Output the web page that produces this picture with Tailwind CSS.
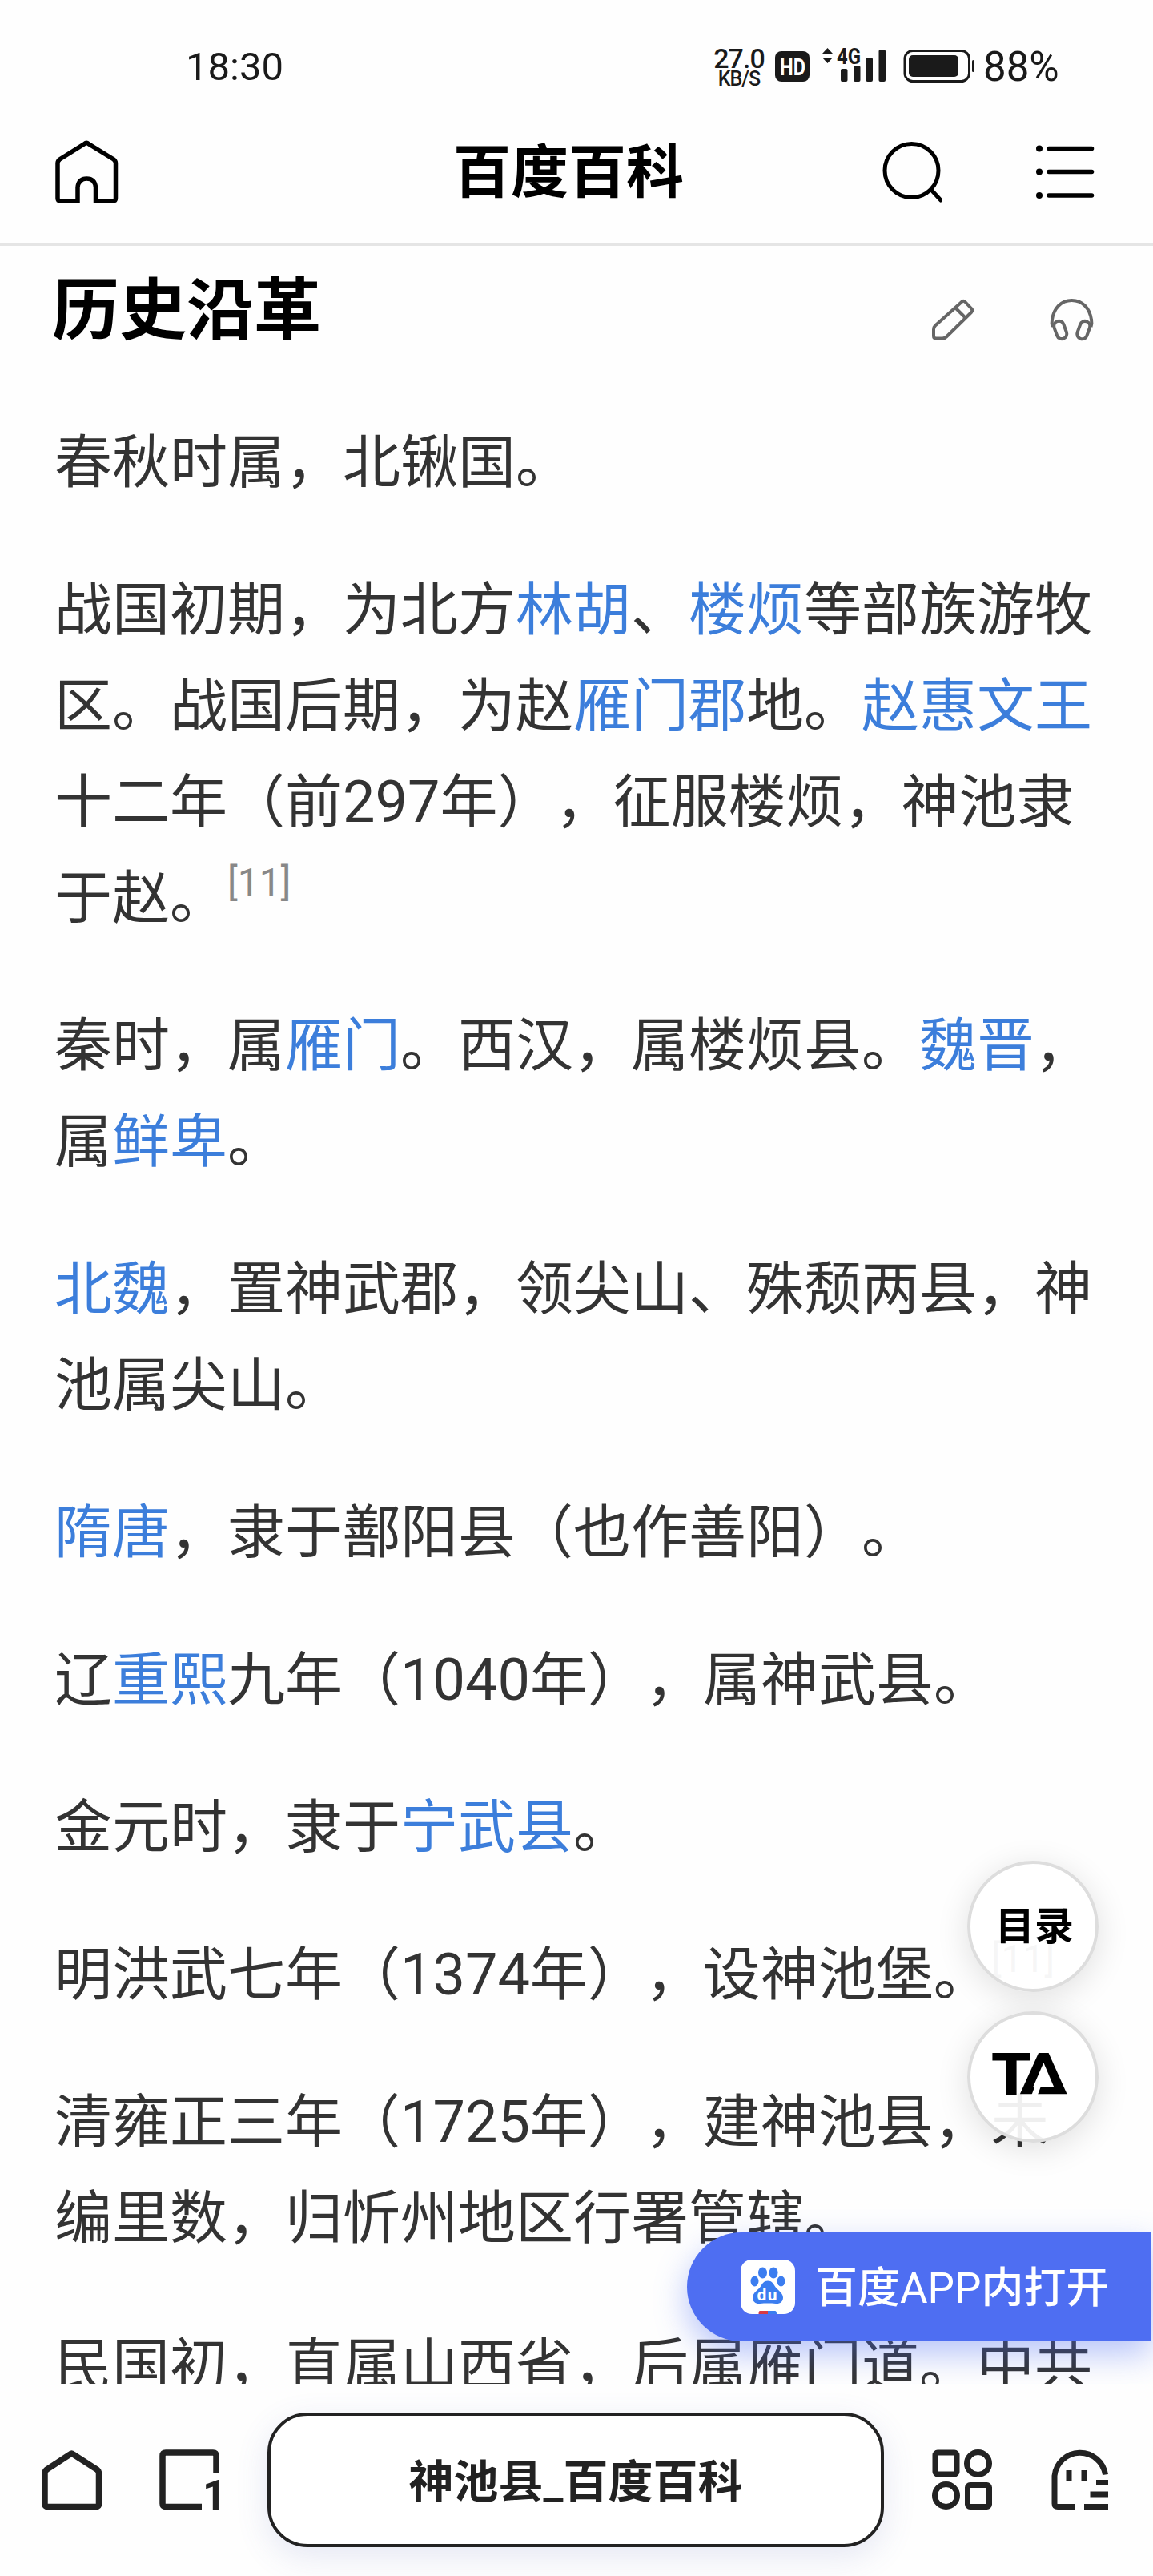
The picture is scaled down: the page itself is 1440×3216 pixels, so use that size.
<!DOCTYPE html>
<html lang="zh-CN">
<head>
    <meta charset="UTF-8">
    <meta name="viewport" content="width=device-width, initial-scale=1.0">
    <script src="https://cdn.jsdelivr.net/npm/@tailwindcss/browser@4"></script>
    <title>神池县_百度百科</title>
</head>
<body class="bg-[#fefefe] font-[Roboto,'Noto_Sans_CJK_SC',sans-serif]">
<div class="w-[1440px] h-[3216px] flex flex-col overflow-hidden [text-spacing-trim:space-all]">

    <!-- Status bar -->
    <div class="h-[124px] shrink-0 flex items-start justify-between pl-[232px] pr-[114px] text-[#1a1a1a]">
        <span class="mt-[54px] text-[49px] leading-[60px]">18:30</span>
        <div class="flex items-start">
            <div class="mt-[56px] w-[66px] flex flex-col items-center font-medium">
                <span class="text-[34px] leading-[34px] tracking-[-1px]">27.0</span>
                <span class="text-[25px] leading-[18px] tracking-[-1px]">KB/S</span>
            </div>
            <svg class="mt-[56px] ml-[12px] w-[254px] h-[52px]" viewBox="968 56 254 52" fill="#1a1a1a">
                <rect x="968" y="64" width="43" height="38" rx="8"/>
                <text x="974" y="94" font-size="29" font-weight="700" fill="#fff" textLength="32" lengthAdjust="spacingAndGlyphs">HD</text>
                <path d="M1027 67l6.500-7 6.500 7zM1027 72l6.500 7 6.500-7z"/>
                <text x="1045" y="79.500" font-size="28" font-weight="700" textLength="30" lengthAdjust="spacingAndGlyphs">4G</text>
                <rect x="1050" y="86" width="8.500" height="16" rx="2"/>
                <rect x="1066" y="82" width="8.500" height="20" rx="2"/>
                <rect x="1081.500" y="72" width="8.500" height="30" rx="2"/>
                <rect x="1097.500" y="62" width="8.500" height="40" rx="2"/>
                <rect x="1130" y="63.500" width="80.500" height="38" rx="10" fill="none" stroke="#1a1a1a" stroke-width="3"/>
                <rect x="1135" y="69" width="62" height="27" rx="5"/>
                <rect x="1214" y="75" width="3" height="15" rx="1.500"/>
            </svg>
            <span class="mt-[54px] ml-[6px] w-[98px] text-[51px] leading-[60px]">88%</span>
        </div>
    </div>

    <!-- Page header -->
    <header class="h-[183px] shrink-0 grid grid-cols-[1fr_288px_1fr] items-center pl-[68px] pr-[72px] border-b-4 border-[#e5e5e5] text-black">
        <svg class="w-20 h-[82px]" viewBox="68 173 80 82" fill="none" stroke="currentColor" stroke-width="5.500">
            <path d="M97 251H75.500q-3.500 0-3.500-3.500V204q0-3 2.500-5L105.500 179.500q2.500-2.500 5 0L142 199q2.500 2 2.500 5v43.500q0 3.500-3.500 3.500H119.500V234q-1-11-11.200-11T97 234z"/>
        </svg>
        <h1 class="mt-1 -ml-2 text-[72px] leading-[100px] font-bold whitespace-nowrap">百度百科</h1>
        <div class="flex items-center justify-end gap-[114px]">
            <svg class="w-[76px] h-20" viewBox="1101 174 76 80" fill="none" stroke="currentColor" stroke-width="5" stroke-linecap="round">
                <circle cx="1138.500" cy="213" r="33.500"/>
                <path d="M1163 237l12 13"/>
            </svg>
            <svg class="w-[77px] h-20" viewBox="1293 174 77 80" fill="none" stroke="currentColor" stroke-width="5.500" stroke-linecap="round">
                <path d="M1312 185.500h53.500M1312 214.500h53.500M1312 244h53.500"/>
                <g fill="currentColor" stroke="none">
                    <circle cx="1300" cy="185.500" r="4"/><circle cx="1300" cy="214.500" r="4"/><circle cx="1300" cy="244" r="4"/>
                </g>
            </svg>
        </div>
    </header>

    <!-- Article -->
    <main class="relative h-[2669px] shrink-0 overflow-hidden px-[68px] text-[#333]">
        <div class="h-[211px] flex items-start justify-between pr-1">
            <h2 class="mt-[22px] -ml-[3px] text-[84px] leading-[120px] font-bold text-black">历史沿革</h2>
            <svg class="mt-[64px] w-[206px] h-14" viewBox="1162 371 206 56" fill="none" stroke="#666" stroke-width="4" stroke-linejoin="round">
                <path d="M1201 377q2-2.500 4.500 0l7.500 8q2.500 2.500 0 5l-31 30.500q-2 2-5 2h-8q-3 0-3-3v-8q0-3 2-5zM1193.500 384.500l12 12"/>
                <path d="M1314.500 408q-1.500-4-.5-9c2-14 11-24 24.500-24s22.500 10 24.500 24q1 5-.5 9"/>
                <rect x="1318" y="400.500" width="12.500" height="23" rx="6.200" transform="rotate(-20 1324 412)"/>
                <rect x="1347" y="400.500" width="12.500" height="23" rx="6.200" transform="rotate(20 1353 412)"/>
            </svg>
        </div>

        <div class="flex flex-col gap-16 text-[72px] leading-[120px]">
            <p>春秋时属，北锹国。</p>
            <p>战国初期，为北方<a class="text-[#3c7edb]">林胡</a>、<a class="text-[#3c7edb]">楼烦</a>等部族游牧<br>区。战国后期，为赵<a class="text-[#3c7edb]">雁门郡</a>地。<a class="text-[#3c7edb]">赵惠文王</a><br>十二年（前297年），征服楼烦，神池隶<br>于赵。<sup class="text-[48px] leading-none text-[#888] align-baseline relative -top-7">[11]</sup></p>
            <p>秦时，属<a class="text-[#3c7edb]">雁门</a>。西汉，属楼烦县。<a class="text-[#3c7edb]">魏晋</a>，<br>属<a class="text-[#3c7edb]">鲜卑</a>。</p>
            <p><a class="text-[#3c7edb]">北魏</a>，置神武郡，领尖山、殊颓两县，神<br>池属尖山。</p>
            <p><a class="text-[#3c7edb]">隋唐</a>，隶于鄯阳县（也作善阳）。</p>
            <p>辽<a class="text-[#3c7edb]">重熙</a>九年（1040年），属神武县。</p>
            <p>金元时，隶于<a class="text-[#3c7edb]">宁武县</a>。</p>
            <p>明洪武七年（1374年），设神池堡。<sup class="text-[48px] leading-none text-[#888] align-baseline relative -top-7">[11]</sup></p>
            <p>清雍正三年（1725年），建神池县，未<br>编里数，归忻州地区行署管辖。</p>
            <p class="whitespace-nowrap">民国初，直属山西省，后属雁门道。中共</p>
        </div>

        <!-- Floating buttons -->
        <div class="absolute right-[68px] top-[2016px] flex flex-col gap-6 text-black">
            <button class="size-[164px] rounded-full border-4 border-[#ddd] bg-white/92 shadow-[0_8px_40px_rgba(0,0,0,0.12)] text-[49px] leading-none font-bold"><span class="block ml-1">目录</span></button>
            <button class="size-[164px] rounded-full border-4 border-[#ddd] bg-white/92 shadow-[0_8px_40px_rgba(0,0,0,0.12)] flex justify-center">
                <svg class="mt-[47px] -ml-2 w-24 h-[58px]" viewBox="0 0 96 58">
                    <text x="0" y="53" font-size="73" font-weight="900" textLength="50" lengthAdjust="spacingAndGlyphs">T</text>
                    <text x="35" y="53" font-size="73" font-weight="700" textLength="60" lengthAdjust="spacingAndGlyphs">Δ</text>
                    <!-- notch in the base of the triangle -->
                    <path d="M53.500 55l5-13" stroke="#fff" stroke-width="7"/>
                </svg>
            </button>
        </div>

        <!-- Open in app -->
        <a class="absolute right-[2px] top-[2480px] w-[580px] h-[136px] flex items-center gap-[25px] pl-[67px] rounded-l-full bg-[#4e6ef2] shadow-[0_16px_40px_rgba(78,110,242,0.4)] text-white">
            <svg class="w-[68px] h-[68px]" viewBox="0 0 68 68">
                <rect width="68" height="68" rx="14" fill="#fff"/>
                <g fill="#3b7df0">
                    <ellipse cx="27.500" cy="16.500" rx="5.500" ry="7"/>
                    <ellipse cx="41" cy="16.500" rx="5.500" ry="7"/>
                    <ellipse cx="17.500" cy="27" rx="5" ry="6.500"/>
                    <ellipse cx="50.500" cy="27" rx="5" ry="6.500"/>
                    <path d="M34 26.500c-5 0-7 3.500-9 7-3 4.500-10 8-10 14 0 5 4 8 9 7.500 4-.5 6-.5 10-.5s6 0 10 .5c5 .5 9-2.500 9-7.500 0-6-7-9.500-10-14-2-3.500-4-7-9-7z"/>
                    <path d="M34 64h9q2 0 2 4H34z"/>
                </g>
                <path d="M24 64h10v4H22.500q0-4 1.500-4z" fill="#d83a45"/>
                <text x="20.500" y="50.500" font-size="21" font-weight="700" fill="#fff" textLength="25">du</text>
            </svg>
            <span class="mt-1 text-[53px] leading-[60px] font-medium whitespace-nowrap">百度<span class="font-normal">APP</span>内打开</span>
        </a>
    </main>

    <!-- Browser toolbar -->
    <nav class="relative h-[240px] shrink-0 flex items-start pt-9 pl-[52px] bg-[#fefefe] text-[#222]">
        <svg class="mt-[42px] w-[224px] h-[84px]" viewBox="52 3054 224 84" fill="none" stroke="currentColor" stroke-width="7.500">
            <path d="M87 3064.500q2.500-2.500 5 0l29 18.500q2.500 2 2.500 5v38q0 3.500-3.500 3.500H59.500q-3.500 0-3.500-3.500v-38q0-3 2.500-5z"/>
            <path d="M252 3129.500h-45q-4 0-4-4V3066q0-4 4-4h59q4 0 4 4v22"/>
            <text x="253" y="3133" font-size="51" font-weight="700" fill="currentColor" stroke="none">1</text>
        </svg>
        <div class="ml-[58px] w-[770px] h-[168px] flex items-center justify-center pt-1.5 rounded-[50px] border-4 border-[#222] bg-white shadow-[0_12px_40px_rgba(80,90,180,0.14)] text-[56px] font-bold whitespace-nowrap">神池县_百度百科</div>
        <svg class="ml-[58px] mt-[42px] w-[224px] h-[84px]" viewBox="1162 3054 224 84" fill="none" stroke="currentColor" stroke-width="7">
            <rect x="1168" y="3062" width="27" height="27" rx="3"/>
            <circle cx="1221.500" cy="3075.500" r="14"/>
            <circle cx="1181.500" cy="3115.500" r="14"/>
            <rect x="1208.500" y="3102.500" width="27" height="27" rx="3"/>
            <path d="M1343 3129.500h-22q-4 0-4-4V3091a32 32 0 0 1 63.500-1.500M1335 3084v13M1354 3084v13M1369 3099.500h15M1361.500 3114h22.500M1354 3129.500h30"/>
        </svg>
    </nav>
</div>
</body>
</html>
